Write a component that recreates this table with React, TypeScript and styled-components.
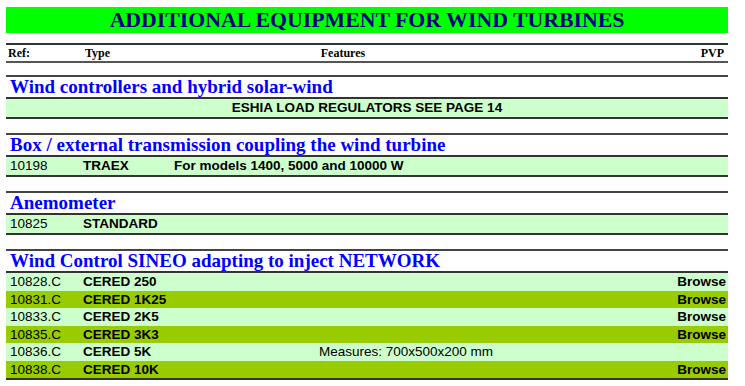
import * as React from 'react'
import styled, { createGlobalStyle } from 'styled-components'

const Global = createGlobalStyle`
  body {
    margin: 0;
    background: #ffffff;
  }
`

const Page = styled.div`
  width: 722px;
  margin: 7px 0 0 6px;
`

const Banner = styled.h1`
  margin: 0;
  height: 26px;
  background: #00ff00;
  color: #000080;
  font-family: 'Liberation Serif', 'Times New Roman', serif;
  font-weight: bold;
  font-size: 21.8px;
  line-height: 26px;
  text-align: center;
`

const HeadRow = styled.div`
  display: grid;
  grid-template-columns: 77px 160px 200px 1fr;
  align-items: center;
  height: 16px;
  margin-top: 10px;
  border-top: 2px solid #333;
  border-bottom: 2px solid #555;
  font-family: 'Liberation Serif', 'Times New Roman', serif;
  font-weight: bold;
  font-size: 12px;
  color: #000;
`

const HeadCell = styled.span<{ $align?: 'left' | 'center' | 'right' }>`
  text-align: ${p => p.$align || 'left'};
  padding-left: ${p => (p.$align === 'right' || p.$align === 'center' ? 0 : 2)}px;
  padding-right: ${p => (p.$align === 'right' ? 4 : 0)}px;
`

const Section = styled.section`
  margin-top: 12px;
  border-top: 2px solid #444;
  border-bottom: 2px solid #333;

  & + & {
    margin-top: 14.5px;
  }
`

const SectionTitle = styled.h2`
  margin: 0;
  height: 20px;
  padding-left: 4px;
  border-bottom: 2px solid #333;
  color: #0000ff;
  font-family: 'Liberation Serif', 'Times New Roman', serif;
  font-weight: bold;
  font-size: 19px;
  line-height: 20px;
  white-space: nowrap;
`

const Row = styled.div<{ $dark?: boolean }>`
  display: grid;
  grid-template-columns: 77px 91px 1fr 90px;
  align-items: center;
  height: 17.5px;
  background: ${p => (p.$dark ? '#99cc00' : '#ccffcc')};
  font-family: 'Liberation Sans', Arial, sans-serif;
  font-size: 13.5px;
  line-height: 17px;
  color: #000;
  white-space: nowrap;
`

const Cell = styled.span<{ $bold?: boolean; $align?: 'left' | 'center' | 'right'; $pad?: number }>`
  font-weight: ${p => (p.$bold ? 'bold' : 'normal')};
  text-align: ${p => p.$align || 'left'};
  padding-left: ${p => p.$pad ?? 0}px;
  padding-right: ${p => (p.$align === 'right' ? 2 : 0)}px;
`

const Notice = styled.div`
  height: 17.5px;
  background: #ccffcc;
  font-family: 'Liberation Sans', Arial, sans-serif;
  font-weight: bold;
  font-size: 13.5px;
  line-height: 17px;
  text-align: center;
`

type Item = {
  ref: string
  type: string
  features?: string
  featuresBold?: boolean
  browse?: boolean
}

const sineo: Item[] = [
  { ref: '10828.C', type: 'CERED 250', browse: true },
  { ref: '10831.C', type: 'CERED 1K25', browse: true },
  { ref: '10833.C', type: 'CERED 2K5', browse: true },
  { ref: '10835.C', type: 'CERED 3K3', browse: true },
  { ref: '10836.C', type: 'CERED 5K', features: 'Measures: 700x500x200 mm' },
  { ref: '10838.C', type: 'CERED 10K', browse: true },
]

function ItemRow({ item, dark }: { item: Item; dark?: boolean }) {
  return (
    <Row $dark={dark}>
      <Cell $pad={4}>{item.ref}</Cell>
      <Cell $bold>{item.type}</Cell>
      {item.featuresBold ? (
        <Cell $bold>{item.features}</Cell>
      ) : (
        <Cell $align="center">{item.features}</Cell>
      )}
      <Cell $bold $align="right">{item.browse ? 'Browse' : ''}</Cell>
    </Row>
  )
}

export default function App() {
  return (
    <Page>
      <Global />
      <Banner>ADDITIONAL EQUIPMENT FOR WIND TURBINES</Banner>

      <HeadRow>
        <HeadCell>Ref:</HeadCell>
        <HeadCell>Type</HeadCell>
        <HeadCell $align="center">Features</HeadCell>
        <HeadCell $align="right">PVP</HeadCell>
      </HeadRow>

      <Section>
        <SectionTitle>Wind controllers and hybrid solar-wind</SectionTitle>
        <Notice>ESHIA LOAD REGULATORS SEE PAGE 14</Notice>
      </Section>

      <Section>
        <SectionTitle>Box / external transmission coupling the wind turbine</SectionTitle>
        <ItemRow
          item={{ ref: '10198', type: 'TRAEX', features: 'For models 1400, 5000 and 10000 W', featuresBold: true }}
        />
      </Section>

      <Section>
        <SectionTitle>Anemometer</SectionTitle>
        <ItemRow item={{ ref: '10825', type: 'STANDARD' }} />
      </Section>

      <Section>
        <SectionTitle>Wind Control SINEO adapting to inject NETWORK</SectionTitle>
        {sineo.map((item, i) => (
          <ItemRow key={item.ref} item={item} dark={i % 2 === 1} />
        ))}
      </Section>
    </Page>
  )
}
